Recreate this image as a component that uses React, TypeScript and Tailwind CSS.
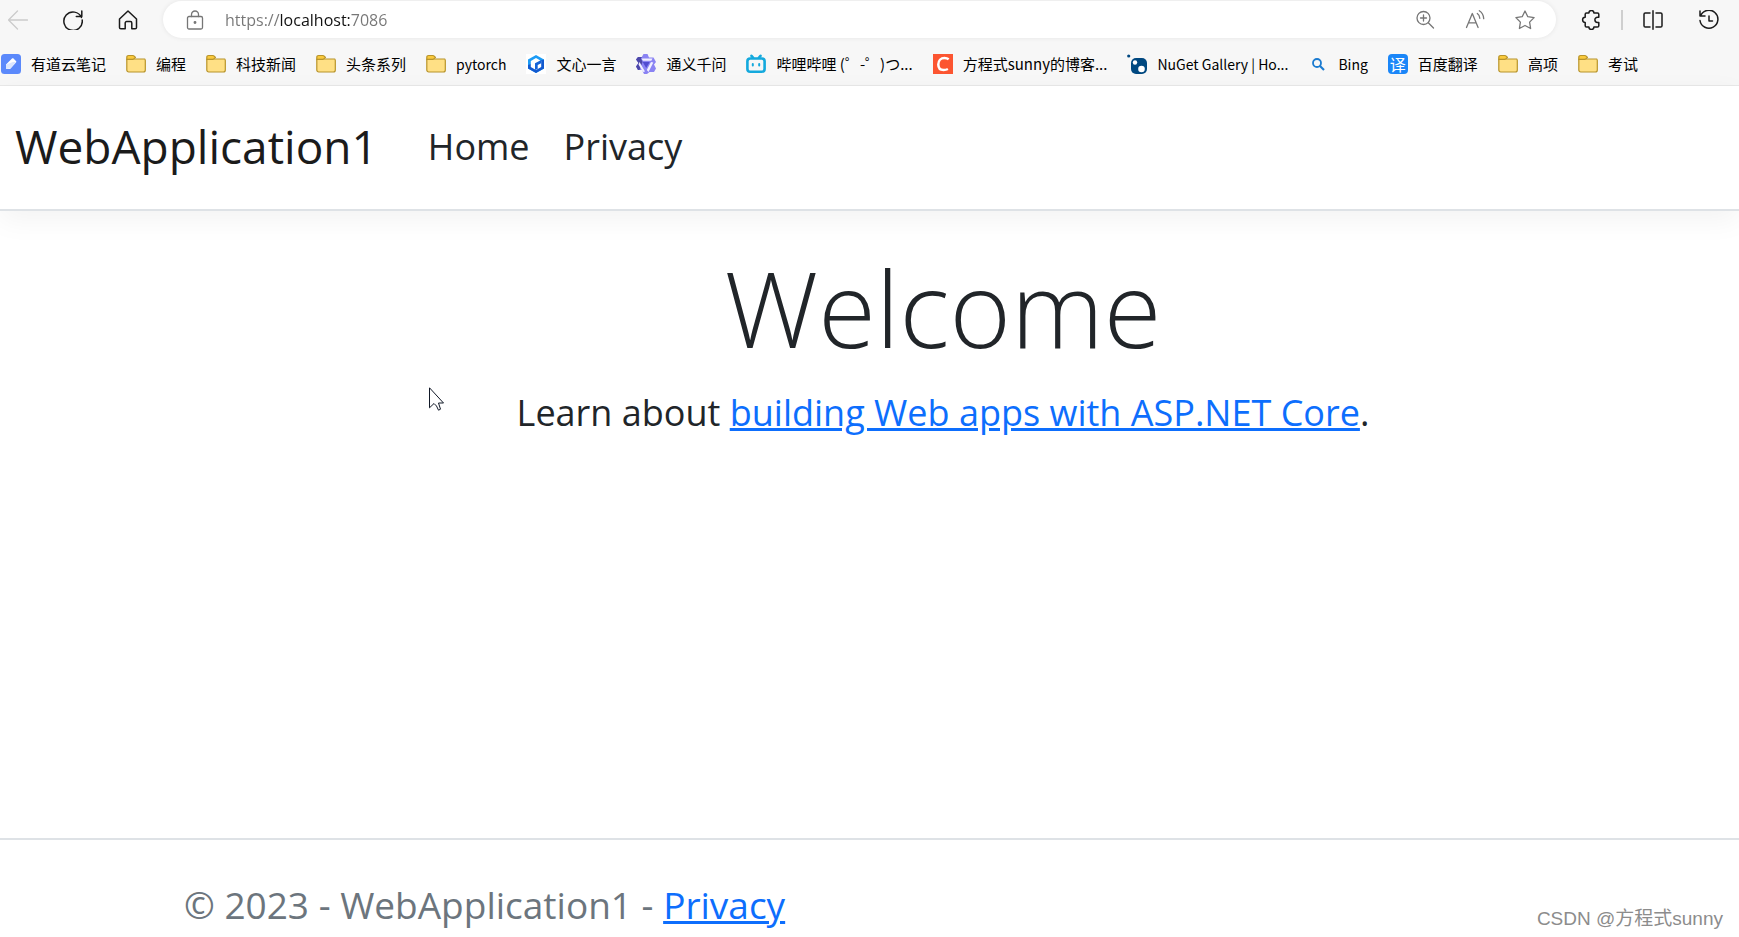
import type { ReactNode } from "react";

const stroke = {
  fill: "none",
  stroke: "currentColor",
  strokeLinecap: "round",
  strokeLinejoin: "round",
} as const;

function Icon({ children, width = 1.5 }: { children: ReactNode; width?: number }) {
  return (
    <svg viewBox="0 0 20 20" className="h-5 w-5 shrink-0" strokeWidth={width} {...stroke}>
      {children}
    </svg>
  );
}

function FolderIcon() {
  return (
    <Icon width={1.2}>
      <path d="M.8 5h18c.3.4.5.9.5 1.500v9.500c0 1.200-.8 2-2 2H2.800c-1.200 0-2-.8-2-2z" fill="#ffe085" stroke="#b8942a" />
      <path d="M.8 5.500V3.300c0-1 .7-1.800 1.800-1.800h4.200c.6 0 1 .2 1.400.6l1.300 1.300-1.300 1.300c-.4.400-.8.600-1.400.6H1.200z" fill="#f9c93c" stroke="#b8942a" />
    </Icon>
  );
}

function YoudaoIcon() {
  return (
    <svg viewBox="0 0 20 20" className="h-5 w-5 shrink-0">
      <rect width="20" height="20" rx="3.500" fill="#5b89fb" />
      <path d="M5 15V10.500L11 4.500c.5-.5 1-.5 1.500 0L15 7c.5.5.5 1 0 1.500L9.500 14.500c-.4.400-.8.500-1.200.5z" fill="#fff" />
      <path d="M5 15V10.500L12 8l3 0L9.500 14.500z" fill="#dbe6ff" />
    </svg>
  );
}

function WenxinIcon() {
  return (
    <svg viewBox="0 0 20 20" className="h-5 w-5 shrink-0">
      <rect width="20" height="20" fill="#fff" />
      <path d="M10 1l8 4.500v9L10 19l-8-4.500v-9z" fill="#1b9bf5" />
      <path d="M18 5.500v9L10 19l-8-4.500V11l16-5.500z" fill="#1259cf" />
      <path d="M10 4l5.200 3v6L10 16l-5.200-3V7z" fill="#fff" />
      <path d="M9 16V9.300L15.200 6v3.200l-3.500 1.800V15z" fill="#1463d8" />
    </svg>
  );
}

function TongyiIcon() {
  return (
    <svg viewBox="0 0 20 20" className="h-5 w-5 shrink-0">
      <path d="M7.500 0h4l1.500 3.500h4.500l2.500 4.500-2 2.500 2 4-2 3.500H13.500L11 20H8l-2-4H2L0 12.500 2.500 9 0 5.500 2 3h4z" fill="#8a83f3" />
      <path d="M7.500 0L5 4.500 6.500 8l-3 8H2L0 12.500 2.500 9 0 5.500 2 3h4z" fill="#4c47a8" />
      <path d="M5.500 4.500h11l-1.200 2.300h7-15.300zM3.500 8l5.500 9.500L7 18 2.500 10.500zM17.300 8.500L12.500 18 10.800 16l4.200-8z" fill="#f1f0ff" />
      <path d="M6.700 8h7L10.200 14z" fill="#504bd0" />
    </svg>
  );
}

function BilibiliIcon() {
  return (
    <Icon width={2.6}>
      <g stroke="#14a9dd">
        <rect x="1.400" y="4.500" width="17.200" height="13.200" rx="2.800" />
        <path d="M5.500 1.800l1.500 1.700M14.500 1.800L13 3.500" />
        <path d="M6.800 10v1.500M13.200 10v1.500" strokeWidth="2" />
      </g>
    </Icon>
  );
}

function CsdnIcon() {
  return (
    <svg viewBox="0 0 20 20" className="h-5 w-5 shrink-0">
      <rect width="20" height="20" fill="#fc5531" />
      <path d="M15.700 5.300C14.500 4.400 13 4 11.500 4 7.800 4 5.300 6.800 5.300 10.500c0 3.400 2 5.500 5.300 5.500 1.600 0 3-.3 4.300-1" fill="none" stroke="#fff" strokeWidth="2.500" />
    </svg>
  );
}

function NugetIcon() {
  return (
    <svg viewBox="0 0 20 20" className="h-5 w-5 shrink-0">
      <circle cx="1.700" cy="2" r="1.600" fill="#004880" />
      <rect x="4" y="4" width="16" height="16" rx="5" fill="#004880" />
      <circle cx="8" cy="8.500" r="2.200" fill="#fff" />
      <circle cx="14.500" cy="15" r="3.300" fill="#fff" />
    </svg>
  );
}

function BingIcon() {
  return (
    <svg viewBox="0 0 20 20" className="h-5 w-5 shrink-0" fill="none" stroke="#1b7bd0" strokeWidth="1.800">
      <circle cx="9" cy="9" r="4" />
      <path d="M12 12l4 4" strokeWidth="2.200" />
    </svg>
  );
}

function TranslateIcon() {
  return (
    <span className="flex h-5 w-5 shrink-0 items-center justify-center rounded-sm bg-[#1a86f8] text-base leading-5 text-white">
      译
    </span>
  );
}

const bookmarks = [
  { label: "有道云笔记", icon: <YoudaoIcon /> },
  { label: "编程", icon: <FolderIcon /> },
  { label: "科技新闻", icon: <FolderIcon /> },
  { label: "头条系列", icon: <FolderIcon /> },
  { label: "pytorch", icon: <FolderIcon />, latin: true },
  { label: "文心一言", icon: <WenxinIcon /> },
  { label: "通义千问", icon: <TongyiIcon /> },
  { label: "哔哩哔哩 (゜-゜)つ...", icon: <BilibiliIcon /> },
  { label: "方程式sunny的博客...", icon: <CsdnIcon /> },
  { label: "NuGet Gallery | Ho...", icon: <NugetIcon />, latin: true },
  { label: "Bing", icon: <BingIcon />, latin: true },
  { label: "百度翻译", icon: <TranslateIcon /> },
  { label: "高项", icon: <FolderIcon /> },
  { label: "考试", icon: <FolderIcon /> },
];

function BrowserBar() {
  return (
    <div className="border-b border-[#e8e8e8] bg-[#f7f7f7] text-[#1b1b1b]">
      {/* Toolbar */}
      <div className="flex h-[39px] items-center pr-5 pl-2">
        <div className="flex items-center gap-[35px]">
          <button aria-label="Back" className="text-[#cccccc]">
            <Icon width={1.3}><path d="M19.500 10H.8M9.500 1L.5 10l9 9" /></Icon>
          </button>
          <button aria-label="Refresh">
            <Icon><path d="M18.500 7.500A9.200 9.200 0 1 0 19.200 10M18.800 1v5.500h-5.500" /></Icon>
          </button>
          <button aria-label="Home">
            <Icon><path d="M1.500 9L10 1l8.500 8v8.500c0 .8-.5 1.300-1.300 1.300h-3.400V13c0-.8-.6-1.400-1.400-1.400H8.600c-.8 0-1.400.6-1.400 1.400v5.800H2.800c-.8 0-1.300-.5-1.300-1.300z" /></Icon>
          </button>
        </div>

        {/* Address bar */}
        <div className="ml-[25px] flex h-[37px] flex-1 items-center rounded-full bg-white pr-[21px] pl-[22px] text-[#767676] shadow-[0_0_5px_rgba(0,0,0,0.08)]">
          <Icon width={1.3}>
            <rect x="2.500" y="6.500" width="15" height="12.500" rx="1.500" />
            <path d="M6.500 6.500V4.500a3.500 3.500 0 0 1 7 0v2" />
            <circle cx="10" cy="12.500" r=".8" fill="currentColor" />
          </Icon>
          <input
            aria-label="Address"
            defaultValue="https://localhost:7086"
            className="ml-5 min-w-0 flex-1 bg-[linear-gradient(90deg,#767676_55px,#111111_55px,#111111_125px,#767676_125px)] bg-clip-text text-base text-transparent caret-black outline-none"
          />
          <div className="flex gap-[30px]">
            <button aria-label="Zoom">
              <Icon width={1.3}><circle cx="8.500" cy="8" r="6.500" /><path d="M13.300 12.800l5.200 5.200M5.500 8h6M8.500 5v6" /></Icon>
            </button>
            <button aria-label="Read aloud">
              <Icon width={1.3}><path d="M1.500 17.500L7.300 3.500l5.800 14M3.500 12.800h7.700M12.300 3.500c1.500 1 2.400 2.700 2.500 4.800M14.300.8c2.600 1.600 4.200 4.400 4.400 7.800" /></Icon>
            </button>
            <button aria-label="Add to favorites">
              <Icon width={1.3}><path d="M10 1l2.800 5.700 6.300.9-4.500 4.500 1 6.400-5.600-3-5.600 3 1-6.400L.9 7.600l6.300-.9z" /></Icon>
            </button>
          </div>
        </div>

        <div className="ml-[25px] flex items-center gap-5">
          <button aria-label="Extensions">
            <Icon><path d="M5.500 3h2.400a2.500 2.500 0 0 1 5 0h3.600c.8 0 1.300.5 1.300 1.300v2.900h-1.300a2.600 2.600 0 0 0 0 5.200h1.300v3.300c0 .8-.5 1.300-1.300 1.300h-3.600a2.500 2.500 0 0 1-5 0H5.500c-.8 0-1.300-.5-1.300-1.300v-3.300a2.600 2.600 0 0 1 0-5.200V4.300C4.200 3.500 4.700 3 5.500 3z" /></Icon>
          </button>
          <span className="h-5 w-0.5 bg-[#cfcfcf]" />
          <button aria-label="Split screen">
            <Icon><path d="M10 .8v18.400M7 3H2.300C1.500 3 1 3.500 1 4.300v11.400c0 .8.5 1.300 1.300 1.300H7M13 3h4.700c.8 0 1.300.5 1.300 1.300v11.400c0 .8-.5 1.300-1.300 1.300H13" /></Icon>
          </button>
          <button aria-label="History" className="ml-4">
            <Icon><path d="M1 1v5H6M1.500 6A9 9 0 1 1 1 10.500M10 6v5h3.500" /></Icon>
          </button>
        </div>
      </div>

      {/* Bookmarks */}
      <nav className="flex h-[46px] items-center gap-5 overflow-hidden pt-1 pl-px font-['Noto_Sans_CJK_SC',sans-serif] text-[15px] leading-5 whitespace-nowrap text-black">
        {bookmarks.map((b) => (
          <a key={b.label} href="#" className="flex shrink-0 items-center gap-2.5">
            {b.icon}
            <span className={b.latin ? "text-sm" : ""}>{b.label}</span>
          </a>
        ))}
      </nav>
    </div>
  );
}

export default function App() {
  return (
    <div className="relative flex min-h-screen flex-col overflow-hidden bg-white font-['Open_Sans','Noto_Sans_CJK_SC',sans-serif] text-[#212529]">
      <BrowserBar />

      <header className="flex h-[125px] items-center border-b-2 border-[#dee2e6] bg-white pb-0.5 pl-[15px] shadow-[0_9px_27px_rgba(0,0,0,0.05)]">
        <a href="#" className="text-[46px] text-[#1b1b1b]">WebApplication1</a>
        <nav className="ml-[50px] flex gap-[34px] text-4xl">
          <a href="#">Home</a>
          <a href="#">Privacy</a>
        </nav>
      </header>

      <main className="flex-1 pt-8 pl-[147px] text-center">
        <h1 className="text-[105px] leading-[130px] font-light">Welcome</h1>
        <p className="mt-3 text-4xl leading-[56px]">
          Learn about <a href="#" className="text-[#0d6efd] underline">building Web apps with ASP.NET Core</a>.
        </p>
      </main>

      <footer className="flex h-[99px] items-center border-t-2 border-[#dee2e6] pt-8 pl-[184px] text-[37px] text-[#6c757d]">
        <p>
          © 2023 - WebApplication1 - <a href="#" className="text-[#0d6efd] underline">Privacy</a>
        </p>
      </footer>

      {/* Watermark */}
      <p className="absolute right-4 bottom-1 font-['Liberation_Sans','Noto_Sans_CJK_SC',sans-serif] text-[19px] text-[#8c8c8c]">
        CSDN @方程式sunny
      </p>

      {/* Mouse pointer */}
      <svg viewBox="0 0 15 24" className="absolute top-[387px] left-[429px] h-6 w-[15px]" fill="#fff" stroke="#111827">
        <path d="M.5.800v20l4.500-4.300 2.500 2.500 2 4.200 2-1-2-6.200h5z" />
      </svg>
    </div>
  );
}
